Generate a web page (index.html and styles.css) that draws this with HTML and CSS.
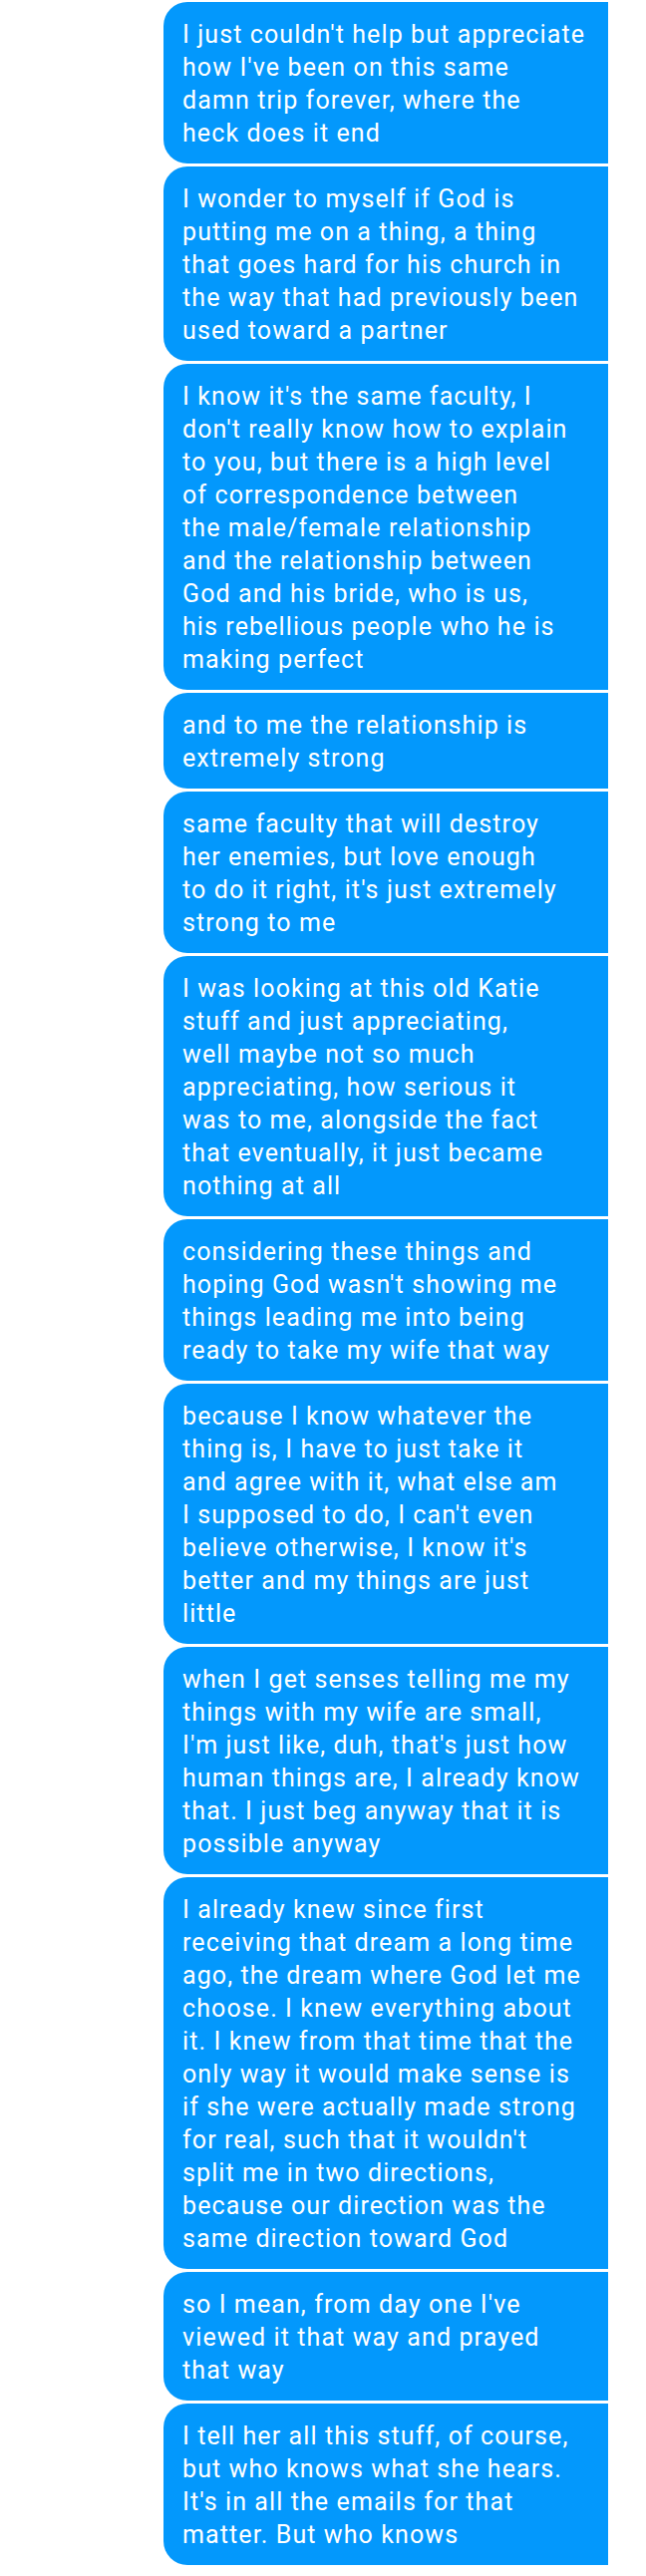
FILE: index.html
```html
<!DOCTYPE html>
<html>
<head>
<meta charset="utf-8">
<link rel="stylesheet" href="styles.css">
</head>
<body>
<div class="thread">
  <div class="bubble">I just couldn't help but appreciate<br>how I've been on this same<br>damn trip forever, where the<br>heck does it end</div>
  <div class="bubble">I wonder to myself if God is<br>putting me on a thing, a thing<br>that goes hard for his church in<br>the way that had previously been<br>used toward a partner</div>
  <div class="bubble">I know it's the same faculty, I<br>don't really know how to explain<br>to you, but there is a high level<br>of correspondence between<br>the male/female relationship<br>and the relationship between<br>God and his bride, who is us,<br>his rebellious people who he is<br>making perfect</div>
  <div class="bubble">and to me the relationship is<br>extremely strong</div>
  <div class="bubble">same faculty that will destroy<br>her enemies, but love enough<br>to do it right, it's just extremely<br>strong to me</div>
  <div class="bubble">I was looking at this old Katie<br>stuff and just appreciating,<br>well maybe not so much<br>appreciating, how serious it<br>was to me, alongside the fact<br>that eventually, it just became<br>nothing at all</div>
  <div class="bubble">considering these things and<br>hoping God wasn't showing me<br>things leading me into being<br>ready to take my wife that way</div>
  <div class="bubble">because I know whatever the<br>thing is, I have to just take it<br>and agree with it, what else am<br>I supposed to do, I can't even<br>believe otherwise, I know it's<br>better and my things are just<br>little</div>
  <div class="bubble">when I get senses telling me my<br>things with my wife are small,<br>I'm just like, duh, that's just how<br>human things are, I already know<br>that. I just beg anyway that it is<br>possible anyway</div>
  <div class="bubble">I already knew since first<br>receiving that dream a long time<br>ago, the dream where God let me<br>choose. I knew everything about<br>it. I knew from that time that the<br>only way it would make sense is<br>if she were actually made strong<br>for real, such that it wouldn't<br>split me in two directions,<br>because our direction was the<br>same direction toward God</div>
  <div class="bubble">so I mean, from day one I've<br>viewed it that way and prayed<br>that way</div>
  <div class="bubble">I tell her all this stuff, of course,<br>but who knows what she hears.<br>It's in all the emails for that<br>matter. But who knows</div>
</div>
</body>
</html>
```

FILE: styles.css
```css
html, body {
  margin: 0;
  padding: 0;
  background: #ffffff;
}

.thread {
  display: flex;
  flex-direction: column;
  gap: 3px;
  padding: 2px 38px 0 164px;
}

.bubble {
  background: #0398fc;
  color: #ffffff;
  font-family: Roboto, "Noto Sans", sans-serif;
  font-size: 25px;
  letter-spacing: 1.1px;
  line-height: 33px;
  padding: 16px 0 14px 19px;
  border-radius: 24px 0 0 24px;
  white-space: nowrap;
}
```
